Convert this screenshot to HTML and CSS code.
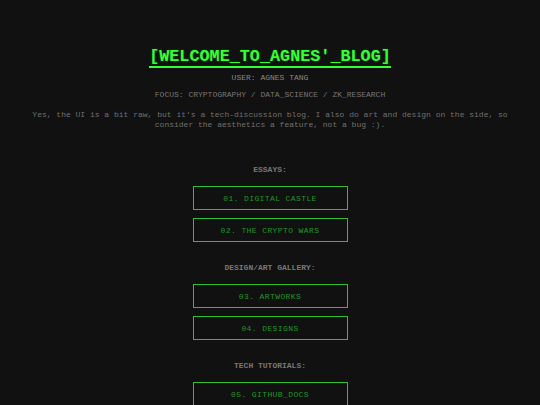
FILE: index.html
```
<!DOCTYPE html>
<html>
<head>
<meta charset="utf-8">
<link rel="stylesheet" href="styles.css">
</head>
<body>
<main class="page">
  <header class="head">
    <h1 class="title">[WELCOME_TO_AGNES'_BLOG]</h1>
    <p class="user">USER: AGNES TANG</p>
    <p class="focus">FOCUS: CRYPTOGRAPHY / DATA_SCIENCE / ZK_RESEARCH</p>
    <p class="intro">Yes, the UI is a bit raw, but it's a tech-discussion blog. I also do art and design on the side, so consider the aesthetics a feature, not a bug :).</p>
  </header>
  <section class="section">
    <h2 class="label">ESSAYS:</h2>
    <a class="btn" href="#">01. DIGITAL CASTLE</a>
    <a class="btn" href="#">02. THE CRYPTO WARS</a>
  </section>
  <section class="section">
    <h2 class="label">DESIGN/ART GALLERY:</h2>
    <a class="btn" href="#">03. ARTWORKS</a>
    <a class="btn" href="#">04. DESIGNS</a>
  </section>
  <section class="section">
    <h2 class="label">TECH TUTORIALS:</h2>
    <a class="btn" href="#">05. GITHUB_DOCS</a>
  </section>
</main>
</body>
</html>
```
FILE: styles.css
```
html, body {
  margin: 0;
  padding: 0;
  background: #111111;
}
body {
  font-family: "Liberation Mono", "Courier New", monospace;
  color: #888888;
}
.page {
  width: 480px;
  margin: 0 auto;
  padding-top: 48px;
  display: flex;
  flex-direction: column;
  align-items: center;
}
.head {
  display: flex;
  flex-direction: column;
  align-items: center;
  text-align: center;
}
.title {
  margin: 0;
  font-size: 16.8px;
  line-height: 17px;
  font-weight: bold;
  color: #33ff33;
  border-bottom: 2px solid #33ff33;
  padding-bottom: 1px;
  text-shadow: 0 0 2px rgba(51, 255, 51, 0.3);
}
.user {
  margin: 5px 0 0;
  font-size: 8px;
  line-height: 10px;
  color: #888888;
}
.focus {
  margin: 7px 0 0;
  font-size: 8px;
  line-height: 10px;
  color: #777777;
}
.intro {
  margin: 10px 0 0;
  font-size: 8px;
  line-height: 10px;
  color: #707070;
}
.section {
  display: flex;
  flex-direction: column;
  align-items: center;
  gap: 8px;
  margin-top: 21px;
}
.section:first-of-type {
  margin-top: 35px;
}
.label {
  margin: 0 0 3px;
  font-size: 8px;
  line-height: 10px;
  font-weight: bold;
  color: #777777;
}
.btn {
  box-sizing: border-box;
  width: 155px;
  height: 24px;
  border: 1px solid #2fbf2f;
  display: flex;
  align-items: center;
  justify-content: center;
  font-size: 8px;
  letter-spacing: 0.4px;
  color: #22962a;
  text-decoration: none;
}
```
